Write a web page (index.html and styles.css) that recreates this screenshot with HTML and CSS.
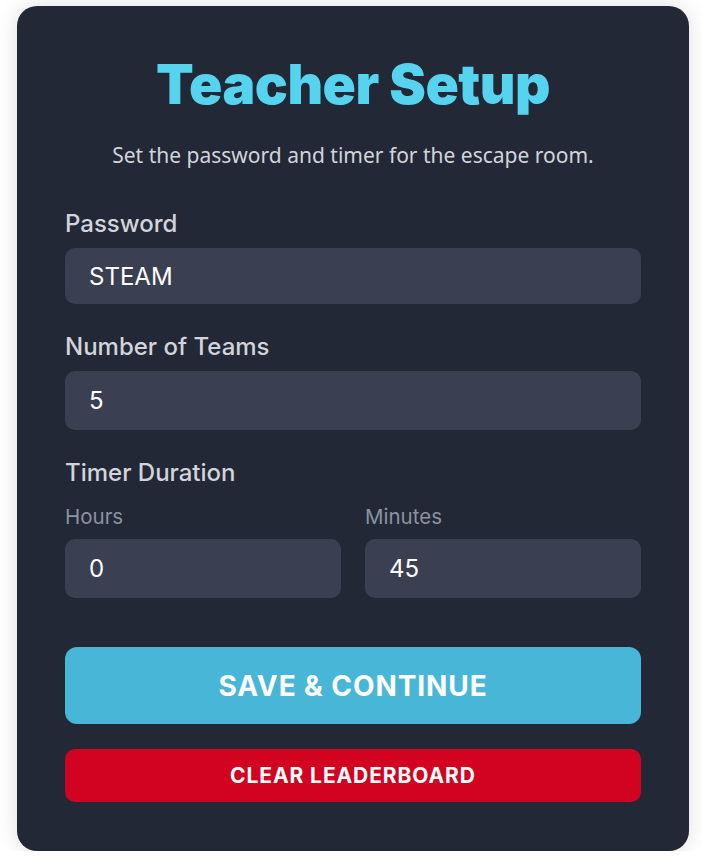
FILE: index.html
```html
<!DOCTYPE html>
<html lang="en">
<head>
<meta charset="utf-8">
<title>Teacher Setup</title>
<link rel="stylesheet" href="styles.css">
</head>
<body>
<main class="card">
  <h1 class="title">Teacher Setup</h1>
  <p class="subtitle">Set the password and timer for the escape room.</p>

  <div class="field field-first">
    <label class="label" for="password">Password</label>
    <input class="input input-text" id="password" type="text" value="STEAM">
  </div>

  <div class="field">
    <label class="label" for="teams">Number of Teams</label>
    <input class="input" id="teams" type="text" value="5">
  </div>

  <div class="field">
    <span class="label">Timer Duration</span>
    <div class="timer-grid">
      <div class="timer-col">
        <label class="sublabel" for="hours">Hours</label>
        <input class="input" id="hours" type="text" value="0">
      </div>
      <div class="timer-col">
        <label class="sublabel" for="minutes">Minutes</label>
        <input class="input" id="minutes" type="text" value="45">
      </div>
    </div>
  </div>

  <div class="actions">
    <button class="btn btn-save" type="button">SAVE &amp; CONTINUE</button>
    <button class="btn btn-clear" type="button">CLEAR LEADERBOARD</button>
  </div>
</main>
</body>
</html>
```

FILE: styles.css
```css
html, body {
  margin: 0;
  padding: 0;
  background: #ffffff;
}

body {
  font-family: "Inter", "Liberation Sans", sans-serif;
  padding: 6px 13px 0 17px;
}

.card {
  box-sizing: border-box;
  width: 672px;
  height: 845px;
  background: #222836;
  border-radius: 20px;
  box-shadow: 0 0 22px rgba(0, 0, 0, 0.13);
  padding: 44px 48px 48px;
  display: flex;
  flex-direction: column;
}

.title {
  margin: 0;
  text-align: center;
  font-size: 55px;
  line-height: 68px;
  font-weight: 900;
  color: #56d4ef;
  letter-spacing: -0.5px;
}

.subtitle {
  margin: 22px 0 0;
  text-align: center;
  font-family: "Noto Sans", "Open Sans", sans-serif;
  font-size: 21px;
  line-height: 30px;
  color: #d1d5db;
}

.field {
  display: flex;
  flex-direction: column;
  margin-top: 29px;
}

.field-first {
  margin-top: 40px;
}

.field:last-of-type {
  margin-top: 28px;
}

.label {
  font-size: 24px;
  line-height: 28px;
  font-weight: 500;
  color: #d1d5db;
  margin-bottom: 10px;
}

.sublabel {
  font-size: 20.5px;
  line-height: 24px;
  color: #8b93a3;
  margin-bottom: 10px;
}

.input {
  box-sizing: border-box;
  width: 100%;
  height: 59px;
  border: none;
  outline: none;
  border-radius: 10px;
  background: #3a4052;
  color: #ffffff;
  font-family: "Inter", "Liberation Sans", sans-serif;
  font-size: 24px;
  padding: 0 24px;
}

.input-text {
  height: 56px;
}

.timer-grid {
  display: grid;
  grid-template-columns: 1fr 1fr;
  gap: 24px;
  margin-top: 8px;
}

.timer-col {
  display: flex;
  flex-direction: column;
}

.actions {
  display: flex;
  flex-direction: column;
  gap: 25px;
  margin-top: 49px;
}

.btn {
  border: none;
  border-radius: 12px;
  color: #ffffff;
  font-family: "Inter", "Liberation Sans", sans-serif;
  font-weight: 700;
  cursor: pointer;
  letter-spacing: 0.9px;
}

.btn-save {
  height: 77px;
  background: #48b6d6;
  font-size: 28px;
}

.btn-clear {
  height: 53px;
  background: #d10320;
  font-size: 21px;
  border-radius: 10px;
}
```
